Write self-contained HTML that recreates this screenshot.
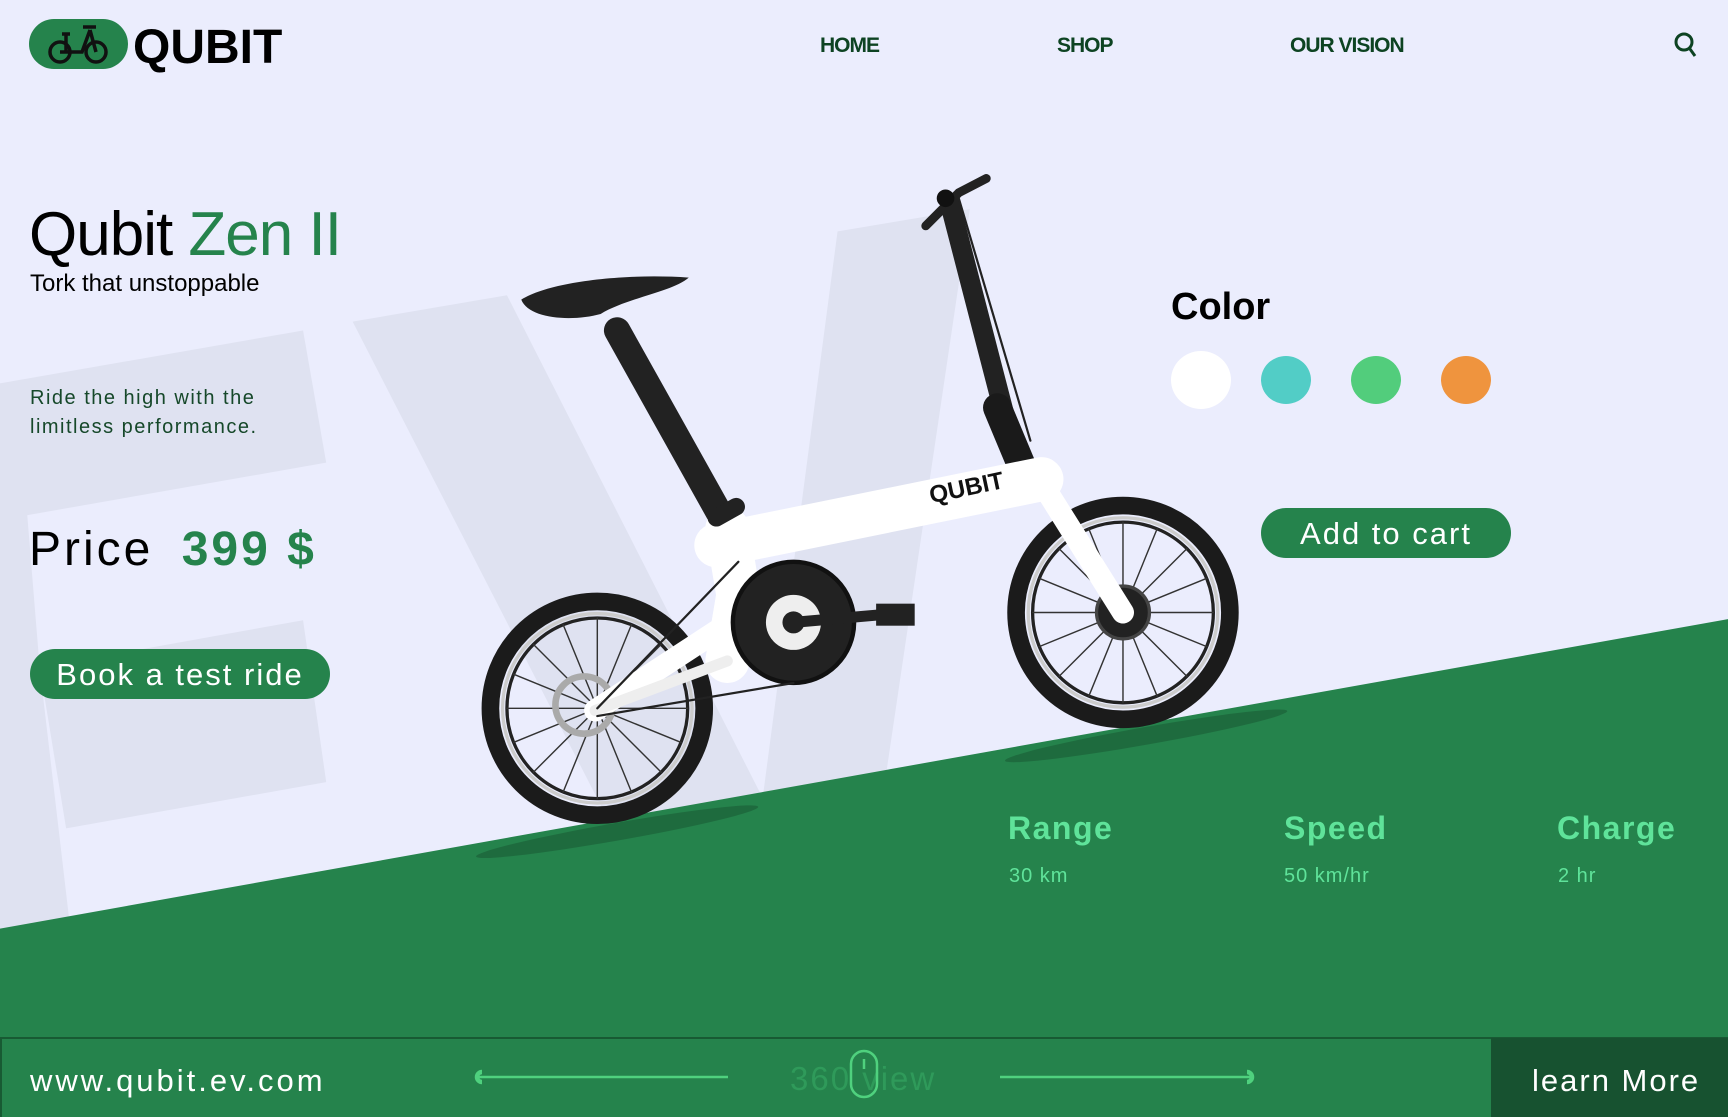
<!DOCTYPE html>
<html><head><meta charset="utf-8"><style>
*{margin:0;padding:0;box-sizing:border-box}
body{width:1728px;height:1117px;overflow:hidden;background:#ebedfd;font-family:"Liberation Sans",sans-serif;position:relative}
.a{position:absolute;white-space:nowrap}
.nav{font-weight:bold;font-size:21px;color:#0d4322;letter-spacing:-1px;top:34px}
.btn{background:#25834c;color:#fff;border-radius:26px;text-align:center}
.st{color:#5fe39a;font-size:32px;font-weight:bold;letter-spacing:1.5px;top:810px}
.sv{color:#5fe39a;font-size:20px;letter-spacing:1px;top:865px}
</style></head><body>
<svg class="a" style="left:0;top:0" width="1728" height="1117" viewBox="0 0 1568 1014" preserveAspectRatio="none">
<g fill="#dfe2f1">
<polygon points="0,348 275,300 296,420 0,472"/>
<polygon points="0,348 15,348 36,606 64,845 0,845"/>
<polygon points="36,606 275,563 296,710 60,752"/>
<polygon points="320,292 460,268 700,740 560,760"/>
<polygon points="760,210 880,190 800,730 690,740"/>
</g>
<polygon points="0,843 1568,562 1568,1014 0,1014" fill="#25834c"/>
<ellipse cx="560" cy="755" rx="130" ry="8" fill="#1a5c36" opacity=".6" transform="rotate(-10 560 755)"/>
<ellipse cx="1040" cy="668" rx="130" ry="8" fill="#1a5c36" opacity=".6" transform="rotate(-10 1040 668)"/>
<g fill="none" stroke-linecap="round">
<circle cx="542" cy="643" r="97" stroke="#1b1b1b" stroke-width="16"/>
<circle cx="542" cy="643" r="86" stroke="#ccc" stroke-width="3"/>
<circle cx="542" cy="643" r="82" stroke="#222" stroke-width="3"/>
<circle cx="1019" cy="556" r="97" stroke="#1b1b1b" stroke-width="16"/>
<circle cx="1019" cy="556" r="86" stroke="#ccc" stroke-width="3"/>
<circle cx="1019" cy="556" r="82" stroke="#222" stroke-width="3"/>
<g stroke="#333" stroke-width="1.3">
<path d="M542 561V725M460 643H624M484 585L600 701M600 585L484 701M511 567L573 719M573 567L511 719M466 612L618 674M466 674L618 612"/>
<path d="M1019 474V638M937 556H1101M961 498L1077 614M1077 498L961 614M988 480L1050 632M1050 480L988 632M943 525L1095 587M943 587L1095 525"/>
</g>
<circle cx="1019" cy="556" r="24" fill="#222" stroke="#444" stroke-width="3"/>
<circle cx="530" cy="640" r="26" stroke="#aaa" stroke-width="6"/>
<path d="M560 300L655 470" stroke="#222" stroke-width="24"/>
<path d="M862 185L915 390" stroke="#222" stroke-width="18"/>
<path d="M905 370L930 430" stroke="#1a1a1a" stroke-width="26"/>
<path d="M840 205L870 175L895 162" stroke="#222" stroke-width="8"/>
<path d="M870 180L935 400" stroke="#222" stroke-width="2"/>
<path d="M660 480L670 540L660 600" stroke="#fff" stroke-width="40"/>
<path d="M650 495L945 435" stroke="#fff" stroke-width="40"/>
<path d="M940 430L1019 556" stroke="#fff" stroke-width="20"/>
<path d="M670 560L540 645" stroke="#fff" stroke-width="20"/>
<path d="M660 600L540 645" stroke="#eee" stroke-width="10"/>
<path d="M650 470L668 460" stroke="#222" stroke-width="16"/>
<circle cx="720" cy="565" r="55" fill="#222" stroke="#111" stroke-width="4"/>
<circle cx="720" cy="565" r="25" fill="#eee" stroke="none"/>
<circle cx="720" cy="565" r="10" fill="#222" stroke="none"/>
<path d="M720 565L800 558" stroke="#222" stroke-width="10"/>
<rect x="795" y="548" width="35" height="20" fill="#222" stroke="none"/>
<path d="M670 510L542 643M720 620L542 650" stroke="#222" stroke-width="2"/>
</g>
<path d="M473 272C500 255 570 248 625 252C610 265 570 270 545 285C520 292 480 290 473 272Z" fill="#222"/>
<circle cx="858" cy="180" r="8" fill="#111"/>
<text x="845" y="457" font-family="Liberation Sans" font-weight="bold" font-size="22" fill="#111" transform="rotate(-12 845 457)">QUBIT</text>
</svg>
<div class="a" style="left:29px;top:19px;width:99px;height:50px;background:#25834c;border-radius:25px"></div>
<svg class="a" style="left:46px;top:20px" width="66" height="48" viewBox="0 0 66 48" fill="none" stroke="#111" stroke-width="3.5">
<circle cx="14" cy="32" r="10"/><circle cx="50" cy="32" r="10"/>
<path d="M14 32H36L44 10M37 7H50M50 32L44 10M20 14V32M16 14H24"/>
</svg>
<div class="a" style="left:133px;top:20px;font-size:48px;font-weight:bold;color:#000">QUBIT</div>
<div class="a nav" style="left:820px">HOME</div>
<div class="a nav" style="left:1057px">SHOP</div>
<div class="a nav" style="left:1290px">OUR VISION</div>
<svg class="a" style="left:1673px;top:31px" width="26" height="28" viewBox="0 0 26 28" fill="none" stroke="#0d4322" stroke-width="3"><circle cx="11" cy="11" r="8"/><path d="M17 18L22 25"/></svg>
<div class="a" style="left:29px;top:199px;font-size:62px;color:#000;letter-spacing:-1px">Qubit <span style="color:#25834c">Zen II</span></div>
<div class="a" style="left:30px;top:270px;font-size:24px;color:#000">Tork that unstoppable</div>
<div class="a" style="left:30px;top:384px;font-size:20px;color:#16482a;letter-spacing:1.5px;line-height:29px">Ride the high with the<br>limitless performance.</div>
<div class="a" style="left:29px;top:522px;font-size:48px;color:#000;letter-spacing:3px">Price <span style="color:#25834c;font-weight:bold;margin-left:12px">399 $</span></div>
<div class="a btn" style="left:30px;top:649px;width:300px;height:50px;font-size:31px;line-height:52px;letter-spacing:2px">Book a test ride</div>
<div class="a" style="left:1171px;top:286px;font-size:38px;font-weight:bold;color:#000">Color</div>
<div class="a" style="left:1171px;top:351px;width:60px;height:58px;border-radius:50%;background:#fff"></div>
<div class="a" style="left:1261px;top:356px;width:50px;height:48px;border-radius:50%;background:#52cdc6"></div>
<div class="a" style="left:1351px;top:356px;width:50px;height:48px;border-radius:50%;background:#52cd7c"></div>
<div class="a" style="left:1441px;top:356px;width:50px;height:48px;border-radius:50%;background:#ef943e"></div>
<div class="a btn" style="left:1261px;top:508px;width:250px;height:50px;font-size:31px;line-height:52px;letter-spacing:2px">Add to cart</div>
<div class="a st" style="left:1008px">Range</div>
<div class="a st" style="left:1284px">Speed</div>
<div class="a st" style="left:1557px">Charge</div>
<div class="a sv" style="left:1009px">30 km</div>
<div class="a sv" style="left:1284px">50 km/hr</div>
<div class="a sv" style="left:1558px">2 hr</div>
<div class="a" style="left:0;top:1037px;width:1728px;height:80px;background:#25834c;border-top:2px solid #185a33;border-left:2px solid #185a33"></div>
<div class="a" style="left:1491px;top:1038px;width:237px;height:79px;background:#175230"></div>
<div class="a" style="left:30px;top:1063px;font-size:31px;color:#fff;letter-spacing:3px">www.qubit.ev.com</div>
<div class="a" style="left:1532px;top:1063px;font-size:31px;color:#fff;letter-spacing:2px">learn More</div>
<div class="a" style="left:790px;top:1060px;font-size:33px;color:#2f9a5a;letter-spacing:2px">360 view</div>
<svg class="a" style="left:460px;top:1045px" width="810" height="60" viewBox="0 0 810 60" fill="none" stroke="#4fd17e" stroke-width="2.5">
<path d="M17 32H268M540 32H792"/>
<path d="M22 26A6 6 0 0 0 22 38M22 28A4 4 0 0 0 22 36"/>
<path d="M787 26A6 6 0 0 1 787 38M787 28A4 4 0 0 1 787 36"/>
<rect x="391" y="6" width="26" height="46" rx="13"/><path d="M404 14V24"/>
</svg>
</body></html>
